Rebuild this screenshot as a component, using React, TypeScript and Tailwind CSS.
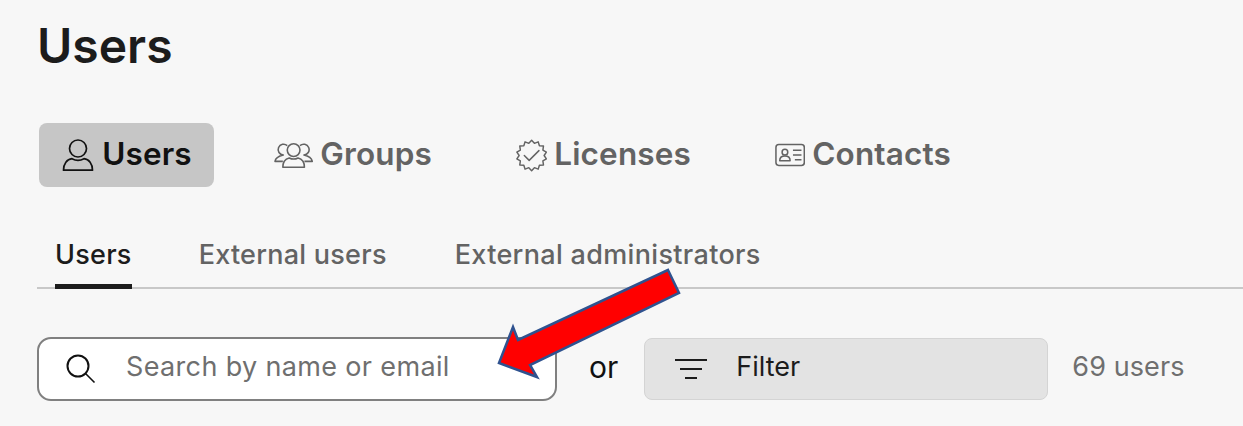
const font = { fontFamily: 'Inter, "Noto Sans", sans-serif' };

// 14 point badge outline for the licenses icon
const badgePoints = Array.from({ length: 28 }, (_, i) => {
  const r = i % 2 === 0 ? 15.500 : 12.800;
  const a = (i * Math.PI) / 14 - Math.PI / 2;
  return `${(16 + r * Math.cos(a)).toFixed(2)},${(16.500 + r * Math.sin(a)).toFixed(2)}`;
}).join(' ');

const UserIcon = () => (
  <svg width="34" height="34" viewBox="0 0 34 34" fill="none" stroke="currentColor" strokeWidth="1.7">
    <circle cx="17" cy="10.5" r="8.5" />
    <path d="M2.500 32.200c0-6.500 3.500-11 8.500-11.500 3.500 2 8.500 2 12 0 5 .5 8.500 5 8.500 11.500z" strokeLinejoin="round" />
  </svg>
);

const GroupsIcon = () => (
  <svg width="40" height="30" viewBox="0 0 40 30" fill="none" stroke="currentColor" strokeWidth="1.6" strokeLinejoin="round">
    <circle cx="20" cy="10" r="6.500" />
    <path d="M9 27.500c0-5 2.500-8.500 6.500-9.500 3 1.500 6 1.500 9 0 4 1 6.500 4.500 6.500 9.500z" />
    <path d="M13.500 5.500A5.500 5.500 0 1 0 9.500 15c-4.500 1-8 3.500-8.500 6.500h8" />
    <path d="M26.500 5.500A5.500 5.500 0 1 1 30.500 15c4.500 1 8 3.500 8.500 6.500h-8" />
  </svg>
);

const LicenseIcon = () => (
  <svg width="32" height="33" viewBox="0 0 32 33" fill="none" stroke="currentColor" strokeWidth="1.5" strokeLinejoin="round">
    <polygon points={badgePoints} />
    <path d="M8.500 16.500l5 5 10-10" strokeLinecap="round" />
  </svg>
);

const ContactIcon = () => (
  <svg width="32" height="24" viewBox="0 0 32 24" fill="none" stroke="currentColor" strokeWidth="1.6">
    <rect x="1" y="1" width="30" height="22" rx="3" />
    <circle cx="10.500" cy="9" r="3" />
    <path d="M5 18c0-3 2-5 5.500-5s5.500 2 5.500 5z" strokeLinejoin="round" />
    <path d="M19 7h9M19 12h9M21 17h7" />
  </svg>
);

const SearchIcon = () => (
  <svg width="30" height="30" viewBox="0 0 30 30" fill="none" stroke="#111111">
    <circle cx="12" cy="12" r="10.500" strokeWidth="2" />
    <path d="M19.500 19.500L28.500 28.500" strokeWidth="1.600" />
  </svg>
);

const FilterIcon = () => (
  <svg width="32" height="22" viewBox="0 0 32 22" fill="none" stroke="currentColor" strokeWidth="2">
    <path d="M0 2h32M5 11h22M10 20h12" />
  </svg>
);

const Arrow = () => (
  <svg className="absolute left-[490px] top-[260px]" width="200" height="125" viewBox="490 260 200 125">
    <path
      d="M668 270L679 293L530 365L537 377L499 363L513 327L518 340Z"
      fill="#ff0000"
      stroke="#2f528f"
      strokeWidth="2.500"
    />
  </svg>
);

const mainTabs = [
  { label: 'Users', icon: <UserIcon />, active: true, width: 'w-[175px]', margin: 'mr-[60px]' },
  { label: 'Groups', icon: <GroupsIcon />, active: false, width: 'w-[158px]', margin: 'mr-[84px]' },
  { label: 'Licenses', icon: <LicenseIcon />, active: false, width: 'w-[175px]', margin: 'mr-[84px]' },
  { label: 'Contacts', icon: <ContactIcon />, active: false, width: 'w-[176px]', margin: '' },
];

export default function App() {
  return (
    <div className="relative h-[426px] w-[1243px] overflow-hidden bg-[#f7f7f7] pl-[37px]" style={font}>
      <h1 className="pt-[17px] text-[48px] leading-[58px] font-semibold text-[#1c1c1c]">Users</h1>

      <div className="mt-[48px] ml-[2px] flex items-center">
        {mainTabs.map(tab => (
          <div
            key={tab.label}
            className={`flex h-[64px] items-center gap-[7px] text-[31.500px] font-[580] tracking-[0.15px] ${tab.margin} ${tab.width} ${
              tab.active ? 'justify-center rounded-[8px] bg-[#c6c6c6] text-[#111111]' : 'text-[#636363]'
            }`}
          >
            {tab.icon}
            <span className="mb-[2px]">{tab.label}</span>
          </div>
        ))}
      </div>

      <div className="mt-[48px] flex h-[54px] gap-[67px] border-b-2 border-[#c8c8c8] pl-[18px] text-[27px] font-medium tracking-[0.25px] text-[#636363]">
        <div className="h-[54px] border-b-[5px] border-[#1c1c1c] text-[#1c1c1c]">Users</div>
        <div>External users</div>
        <div className="ml-[1px] tracking-[0.33px]">External administrators</div>
      </div>

      <div className="mt-[48px] flex items-center">
        <div className="flex h-[64px] w-[520px] items-center rounded-[14px] border-2 border-[#808080] bg-white pl-[27px]">
          <SearchIcon />
          <span className="mb-[4px] ml-[30px] text-[27px] tracking-[0.35px] text-[#6f6f6f]">Search by name or email</span>
        </div>
        <span className="mb-[4px] ml-[32px] text-[30px] text-[#111111]">or</span>
        <div className="ml-[26px] flex h-[62px] w-[404px] items-center rounded-[8px] border border-[#d4d4d4] bg-[#e3e3e3] pl-[30px] text-[27px] text-[#1c1c1c]">
          <FilterIcon />
          <span className="mb-[4px] ml-[29px]">Filter</span>
        </div>
        <span className="mb-[4px] ml-[24px] text-[27px] tracking-[0.1px] text-[#6f6f6f]">69 users</span>
      </div>

      <Arrow />
    </div>
  );
}
